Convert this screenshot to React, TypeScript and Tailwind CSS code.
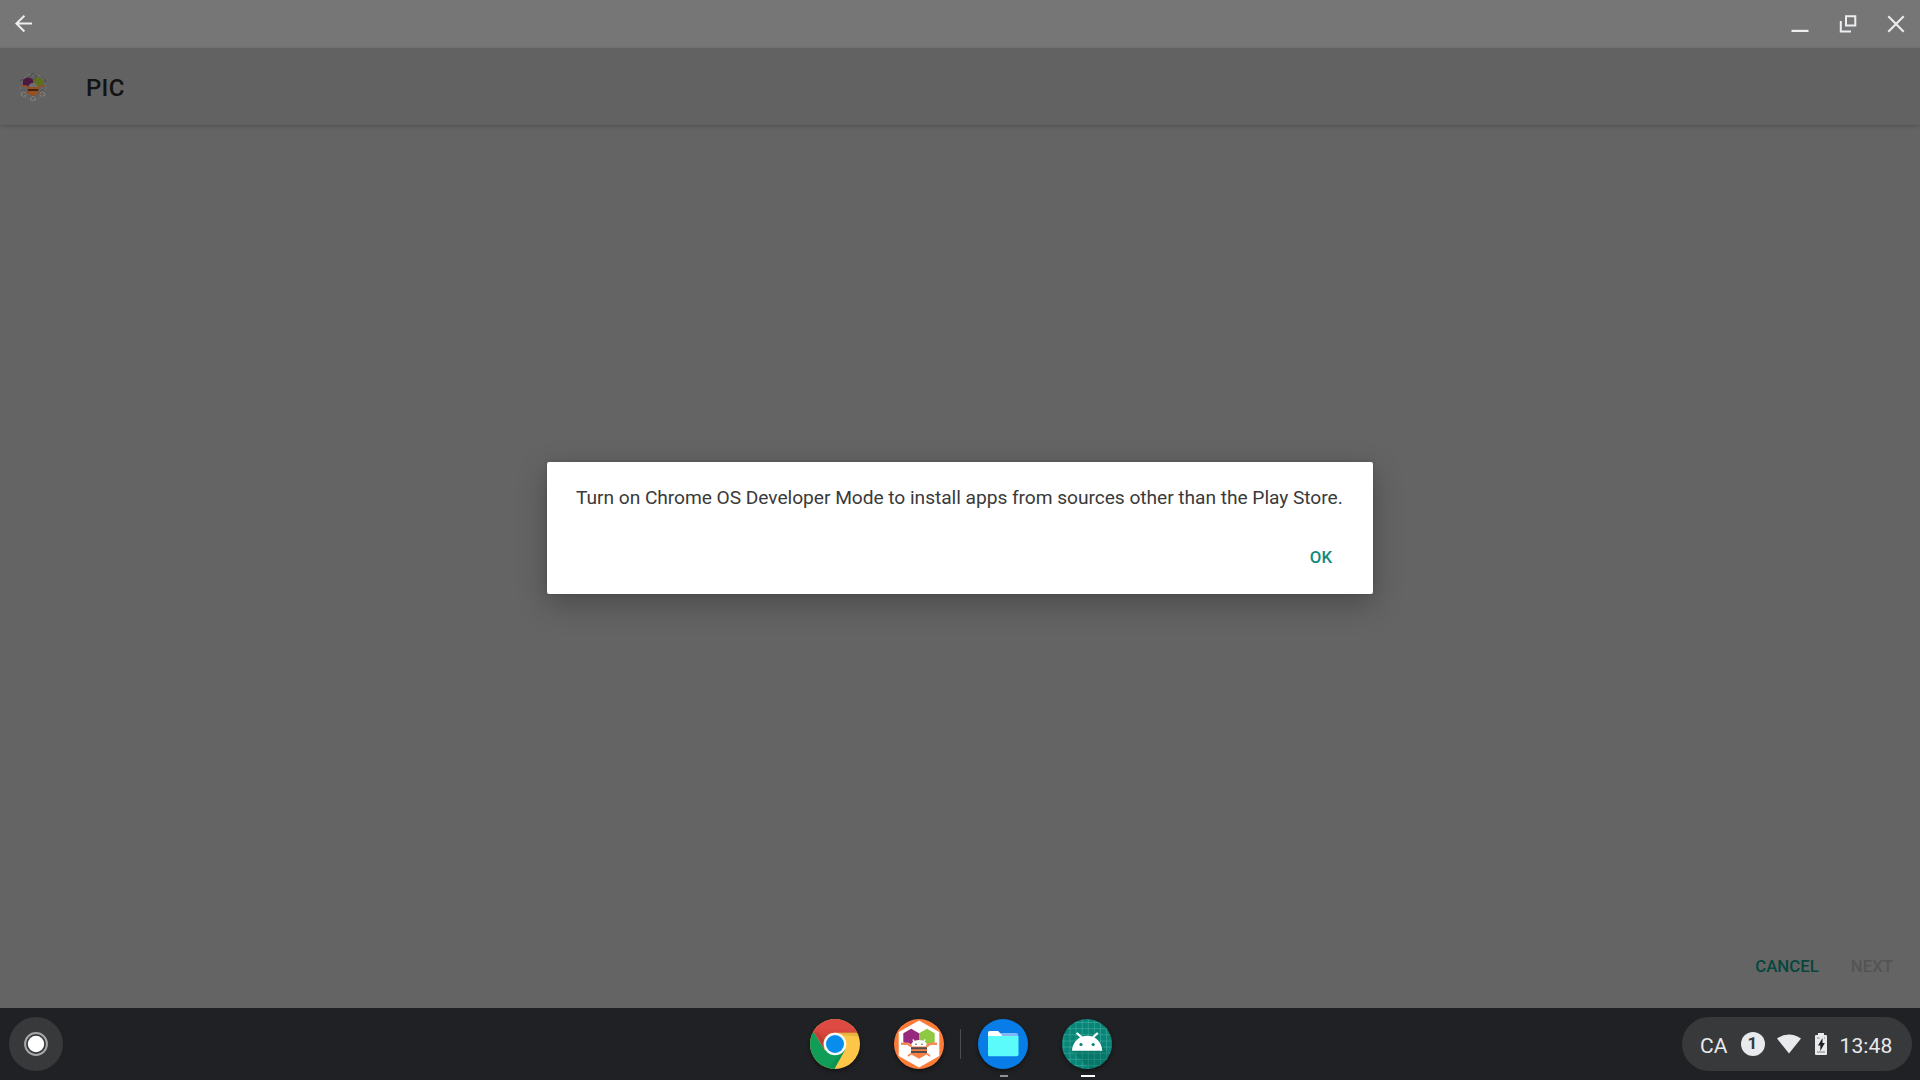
import type { ReactNode } from "react";

function BackArrow() {
  return (
    <svg width="18" height="18" viewBox="0 0 18 18" fill="none" stroke="#eceef0" strokeWidth="2">
      <path d="M17 8.500H2M9.400 .7 1.400 8.500l8 8" />
    </svg>
  );
}

function WindowControls() {
  return (
    <div className="flex items-center">
      <svg width="18" height="18" viewBox="0 0 18 18" className="mr-[30px]">
        <rect x=".5" y="14.8" width="17" height="2.2" fill="#eceef0" />
      </svg>
      <svg width="18" height="18" viewBox="0 0 18 18" fill="none" stroke="#eceef0" strokeWidth="2" className="mr-[30px]">
        <path d="M7 1.3h9.3v9.2H7z" />
        <path d="M1.8 6v10.5H12" />
      </svg>
      <svg width="18" height="18" viewBox="0 0 18 18" fill="none" stroke="#eceef0" strokeWidth="2">
        <path d="m1.3 1.3 15.4 15.4M16.7 1.3 1.3 16.7" />
      </svg>
    </div>
  );
}

function ShadedBeeIcon() {
  return (
    <svg width="28" height="30" viewBox="0 0 28 30">
      <circle cx="14" cy="15" r="12.8" fill="none" stroke="#787878" strokeWidth="1" strokeDasharray="3 2.4" />
      <g fill="none" stroke="#424242" strokeWidth="1" strokeDasharray="1.8 1.6">
        <path d="M14 1.5 17 3.2v3L14 7l-3-.8v-3zM14 23.5l3 1.5v3l-3 1.3-3-1.3v-3z" />
        <path d="M4.5 18.5 7.5 20v3l-3 1.4-3-1.4v-3zM23.5 18.5l3 1.5v3l-3 1.4-3-1.4v-3zM2 8l3-3M26 8l-3-3M2 8v4M26 8v4" />
      </g>
      <g fill="none" stroke="#858585" strokeWidth="1">
        <path d="m4.5 19.5 2.5 1.2v2.5l-2.5 1.2-2.5-1.2v-2.5zM23.5 19.5l2.5 1.2v2.5l-2.5 1.2-2.5-1.2v-2.5zM14 24.5l2.5 1v2.5l-2.5 1-2.5-1v-2.5z" />
      </g>
      <path d="m9 5.2 5 2.4V13l-5 2-5-2V7.600z" fill="#4c1740" />
      <path d="m19 5.200 5 2.400V13l-5 2-5-2V7.600z" fill="#5c7020" />
      <path d="M1.500 14h6l2 2M26.500 14h-6l-2 2" stroke="#935225" strokeWidth="1.500" fill="none" />
      <path d="M9.500 15.500q0-4.500 4.500-4.500t4.500 4.500z" fill="#707070" />
      <path d="M9 15.500h10v5.500l-5 2.500-5-2.500zM8 21l-2 2M20 21l2 2" fill="#98501f" stroke="#98501f" />
      <path d="M8.700 18h10.600" stroke="#351d16" strokeWidth="1.800" />
    </svg>
  );
}

function ChromeIcon() {
  return (
    <svg width="50" height="50" viewBox="0 0 50 50">
      <defs>
        <clipPath id="chromeDisc"><circle cx="25" cy="25" r="25" /></clipPath>
        <linearGradient id="redShade" x1="0" y1="0" x2="0" y2="1">
          <stop offset=".3" stopColor="#dc4a41" />
          <stop offset="1" stopColor="#bf3a32" />
        </linearGradient>
      </defs>
      <g clipPath="url(#chromeDisc)">
        <rect width="50" height="50" fill="#fdc649" />
        <path d="M3.300 12.500 14.700 31 35 31 24.500 50H0V0z" fill="#0f9d58" />
        <path d="M3.300 12.500 0 0h50v13.700H25a11.300 11.300 0 0 0-10.300 16.500z" fill="url(#redShade)" />
        <path d="M25 13.700h25v4L31 16z" fill="#b98a24" opacity=".3" />
        <path d="m3.300 12.500 10.600 18 1.600-6L8.400 13z" fill="#8d2c28" opacity=".22" />
        <path d="M34.800 30.600 24 50l-5-1 10-13z" fill="#087341" opacity=".25" />
      </g>
      <circle cx="25" cy="25" r="11.300" fill="#f5f7f8" />
      <circle cx="25" cy="25" r="9" fill="#078eec" />
    </svg>
  );
}

function BeeAppIcon() {
  return (
    <svg width="50" height="50" viewBox="0 0 50 50">
      <circle cx="25" cy="25" r="25" fill="#ff7b38" />
      <path d="M25 1.500 45.300 13v24L25 48.500 4.700 37V13z" fill="#fff" />
      <path d="M17.200 9.700 25 14.200v9L17.200 28l-7.900-4.800v-9z" fill="#96287d" />
      <path d="M33 9.700 40.700 14.200v9L33 28l-8-4.800v-9z" fill="#8fc843" />
      <path d="M16.800 28q0-7 8.200-7t8.200 7z" fill="#fff" />
      <path d="M19 20.500q.5 2.500 3 3M31 20.500q-.5 2.500-3 3" stroke="#fff" strokeWidth="1.500" fill="none" />
      <circle cx="22" cy="25.200" r=".8" fill="#555" /><circle cx="28" cy="25.200" r=".8" fill="#555" />
      <path d="M7 24.700h6q3 0 4.200 3M43 24.700h-6q-3 0-4.200 3" stroke="#f58b57" strokeWidth="2.500" fill="none" />
      <path d="M17 27.500h16v7.800L25 39.700l-8-4.400z" fill="#f58145" />
      <path d="M17.500 34.500 13.800 37M32.500 34.500l3.700 2.500" stroke="#f58b57" strokeWidth="1.600" />
      <path d="M17 29.200h16M17 33.100h16" stroke="#514a50" strokeWidth="2" />
    </svg>
  );
}

function FilesIcon() {
  return (
    <svg width="50" height="50" viewBox="0 0 50 50">
      <circle cx="25" cy="25" r="25" fill="#087de7" />
      <path d="M21 14h17.500q1.500 0 1.500 1.500V20H21z" fill="#86b5f5" />
      <path d="M11.500 12h8.700l4.300 5H10v-3.500q0-1.500 1.500-1.500z" fill="#fff" />
      <path d="M10 17h30.500v18.600q0 1.600-1.600 1.600H11.500q-1.500 0-1.500-1.500z" fill="#5cfbfb" />
    </svg>
  );
}

function AndroidIcon() {
  return (
    <svg width="50" height="50" viewBox="0 0 50 50">
      <defs>
        <clipPath id="androidDisc"><circle cx="25" cy="25" r="25" /></clipPath>
      </defs>
      <g clipPath="url(#androidDisc)">
        <rect width="50" height="50" fill="#078577" />
        <path d="M1.800 0v50M8 0v50M14 0v50M20.200 0v50M26.300 0v50M32.400 0v50M38.500 0v50M44.600 0v50M0 3.500h50M0 9.700h50M0 15.800h50M0 22h50M0 28.100h50M0 34.200h50M0 40.400h50M0 46.500h50" stroke="#48aa9f" strokeWidth=".6" />
        <path d="m10 31.500 18 18.500h22V38L38 24z" fill="#045e50" opacity=".32" />
      </g>
      <path d="M10 31.700c.4-6.200 3.700-10.700 8-13.200l-4.200-4 1.600-1.300 5 4.300c3.300-.9 6.600-.9 9.800 0l4.800-4.300 1.600 1.300-4.200 4c4.300 2.500 7.500 7 7.900 13.200z" fill="#fff" />
      <circle cx="19" cy="25.500" r="1.600" fill="#078577" />
      <circle cx="31.200" cy="25.500" r="1.600" fill="#078577" />
    </svg>
  );
}

function ShelfApp({ label, children, indicator }: { label: string; children: ReactNode; indicator?: ReactNode }) {
  return (
    <button aria-label={label} className="flex h-[72px] w-[50px] flex-col items-center pt-[11px]">
      <span className="block size-[50px] rounded-full shadow-[0_2px_4px_rgba(0,0,0,0.45)]">{children}</span>
      {indicator}
    </button>
  );
}

function Shelf() {
  return (
    <footer className="flex h-[72px] w-full bg-[#202124]">
      <button aria-label="Launcher" className="mt-[9px] ml-[9px] flex size-[54px] items-center justify-center rounded-full bg-[#38393b]">
        <svg width="24" height="24" viewBox="0 0 24 24">
          <circle cx="12" cy="12" r="10.900" fill="none" stroke="#a6a7a8" strokeWidth="2" />
          <circle cx="12" cy="12" r="8.200" fill="#fff" />
        </svg>
      </button>
      <nav className="ml-[747px] flex">
        <ShelfApp label="Chrome"><ChromeIcon /></ShelfApp>
        <div className="w-[34px]" />
        <ShelfApp label="PIC"><BeeAppIcon /></ShelfApp>
        <div className="mt-[21px] ml-4 h-[30px] w-px bg-[#4c4d50]" />
        <div className="w-[17px]" />
        <ShelfApp label="Files" indicator={<span className="mt-1.5 ml-0.5 h-0.5 w-2 bg-[#909193]" />}><FilesIcon /></ShelfApp>
        <div className="w-[34px]" />
        <ShelfApp label="Android" indicator={<span className="mt-1.5 ml-0.5 h-0.5 w-3.5 bg-white" />}><AndroidIcon /></ShelfApp>
      </nav>
      <div className="mt-[9px] mr-[8.500px] ml-auto flex h-[54px] w-[229.500px] items-center rounded-full bg-[#38393b] pl-[18px] text-[21px] leading-none text-[#e8eaed]">
        <span className="mt-1 w-[40.500px] whitespace-nowrap">CA</span>
        <span className="-mt-px flex size-6 shrink-0 items-center justify-center rounded-full bg-[#e8eaed] text-[17px] font-bold text-[#38393b]">1</span>
        <svg width="24" height="20" viewBox="0 0 24 20" className="ml-3">
          <path d="M0 4.500Q12-3.500 24 4.500L12 19.500z" fill="#e8eaed" />
        </svg>
        <svg width="12" height="22" viewBox="0 0 12 22" className="ml-3.5">
          <path d="M3 0h6v2h2q1 0 1 1v18q0 1-1 1H1q-1 0-1-1V3q0-1 1-1h2z" fill="#e8eaed" />
          <path d="M7.500 5 3 12.500h2.300V18L9.800 10H7.500z" fill="#202124" />
          <path d="M2 5h2.500M9 5h1M2 19h8" stroke="#7c7e80" />
        </svg>
        <span className="mt-1 ml-[13px] tracking-[0.1px] whitespace-nowrap">13:48</span>
      </div>
    </footer>
  );
}

function InstallDialog() {
  return (
    <section role="dialog" className="absolute top-[462px] left-[547px] flex h-[132px] w-[826px] flex-col rounded-[2px] bg-white px-[29px] shadow-[0_10px_30px_rgba(0,0,0,0.26),0_0_5px_rgba(0,0,0,0.12)]">
      <p className="mt-[25px] text-[19.2px] leading-[22px] tracking-[-0.05px] whitespace-nowrap text-[#3a3a3a]">
        Turn on Chrome OS Developer Mode to install apps from sources other than the Play Store.
      </p>
      <button className="mt-[38px] mr-[12px] self-end text-[16.8px] leading-5 font-medium text-[#12897b]">OK</button>
    </section>
  );
}

export default function App() {
  return (
    <div className="relative flex h-[1080px] w-[1920px] flex-col overflow-hidden bg-[#646464] font-[Roboto,sans-serif]">
      <header className="flex h-12 shrink-0 items-center justify-between bg-[#767676] pr-[15px] pl-[15px]">
        <BackArrow />
        <WindowControls />
      </header>
      <div className="flex h-[77px] shrink-0 items-center bg-[#626262] pl-[19px] shadow-[0_1px_4px_rgba(0,0,0,0.22)]">
        <ShadedBeeIcon />
        <h1 className="mt-0.5 ml-[39px] text-[24px] leading-none font-medium tracking-[0.3px] text-[#131313]">PIC</h1>
      </div>
      <main className="flex flex-1 items-end justify-end pr-[27px] pb-[32px] text-[16.8px] leading-5 font-medium">
        <button className="text-[#06463d]">CANCEL</button>
        <button className="ml-8 text-[#545454]">NEXT</button>
      </main>
      <Shelf />
      <InstallDialog />
    </div>
  );
}
